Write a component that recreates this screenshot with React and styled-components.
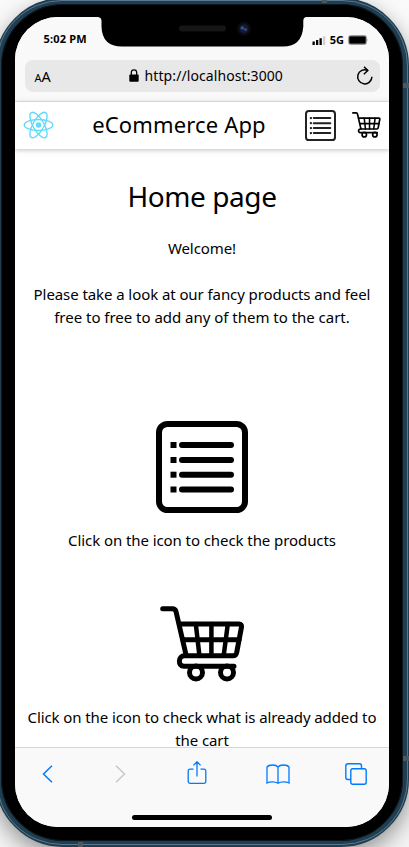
import React from 'react';
import styled, { createGlobalStyle } from 'styled-components';

const Global = createGlobalStyle`
  * { box-sizing: border-box; }
  html, body { margin: 0; height: 847px; overflow: hidden; background: #fff; }
  #root { height: 847px; overflow: hidden; }
  svg { display: block; flex: none; }
`;

const Stage = styled.div`
  position: relative;
  width: 409px;
  height: 847px;
  overflow: hidden;
  background: linear-gradient(#fafafa, #f4f4f4);
  font-family: "Noto Sans", "Open Sans", sans-serif;
  color: #000;
`;

const Phone = styled.div`
  width: 414px;
  height: 849px;
  margin: -2px 0 0 -5px;
  padding: 13px 14px 14px;
  border: 6px solid #213e51;
  border-radius: 68px;
  background: #000;
  box-shadow: inset 0 0 0 1px #0d171e, 0 8px 22px rgba(0, 0, 0, 0.4);
`;

const FrameShine = styled.div`
  position: absolute;
  left: -4px;
  top: 0;
  width: 412px;
  height: 845px;
  border: 1px solid #587a90;
  border-radius: 66px;
`;

const FrameBand = styled.i`
  position: absolute;
  left: ${(p) => p.$x}px;
  top: ${(p) => p.$y}px;
  width: ${(p) => p.$w}px;
  height: ${(p) => p.$h}px;
  background: #4a5860;
`;

const Screen = styled.div`
  display: flex;
  flex-direction: column;
  width: 374px;
  height: 810px;
  border-radius: 43px;
  overflow: hidden;
  background: #fff;
`;

const StatusBar = styled.div`
  position: relative;
  flex: none;
  display: flex;
  justify-content: space-between;
  height: 43px;
  padding: 13px 20px 0 28.5px;
  background: #f9f9f9;
  font-size: 11px;
  line-height: 18px;
  font-weight: 700;
`;

const Clock = styled.span`
  letter-spacing: 0.2px;
`;

const Signal = styled.div`
  display: flex;
  align-items: center;
  height: 20px;
  gap: 4px;
`;

const Notch = styled.svg`
  position: absolute;
  left: 83px;
  top: 0;
`;

const AddressArea = styled.div`
  flex: none;
  height: 42px;
  padding: 0 9px 0 10px;
  background: #f9f9f9;
  border-bottom: 1px solid #e6e6e6;
`;

const AddressBar = styled.div`
  display: grid;
  grid-template-columns: 63px 1fr 60px;
  align-items: center;
  height: 31.5px;
  padding: 0 6px 0 9.5px;
  border-radius: 8px;
  background: #e8e8e8;
`;

const TextSize = styled.span`
  font-size: 14.5px;
  small { font-size: 11px; }
`;

const Address = styled.span`
  display: flex;
  align-items: center;
  justify-content: center;
  gap: 6px;
  font-size: 14px;
  letter-spacing: ${(p) => p.$spacing}px;
  white-space: nowrap;
`;

const Reload = styled.span`
  justify-self: end;
`;

const Header = styled.header`
  position: relative;
  flex: none;
  display: flex;
  align-items: center;
  height: 46.5px;
  padding: 0 8px;
  background: #fff;
  box-shadow: 0 1px 5px rgba(0, 0, 0, 0.25);
`;

const AppName = styled.div`
  flex: 1;
  padding: 0 1px 2px 0;
  text-align: center;
  font-size: 22px;
  line-height: 30px;
  letter-spacing: 0.15px;
  white-space: nowrap;
`;

const HeaderIcons = styled.div`
  display: flex;
  align-items: center;
  gap: 16px;
`;

const Content = styled.main`
  flex: 1;
  min-height: 0;
  overflow: hidden;
  display: flex;
  flex-direction: column;
  align-items: center;
  padding-top: 25.5px;
`;

const Title = styled.h1`
  margin: 0 0 19px;
  font-size: 28px;
  font-weight: 400;
  line-height: 44px;
  letter-spacing: -0.42px;
`;

const Line = styled.div`
  height: 23px;
  font-size: 15px;
  line-height: 23px;
  letter-spacing: ${(p) => p.$spacing ?? -0.08}px;
  white-space: nowrap;
`;

const Paragraph = styled.div`
  display: flex;
  flex-direction: column;
  align-items: center;
  margin-bottom: ${(p) => p.$after || 0}px;
`;

const LinkIcon = styled.div`
  margin-bottom: ${(p) => p.$after}px;
`;

const BottomBar = styled.nav`
  flex: none;
  height: 80px;
  background: #f9f9f9;
  border-top: 1px solid #d8d8d8;
`;

const Tools = styled.div`
  display: grid;
  grid-template-columns: 64px 83px 69px 93px 64px;
  align-items: center;
  justify-items: center;
  height: 52px;
`;

const HomeIndicator = styled.div`
  width: 140px;
  height: 5px;
  margin: 15px auto 0;
  border-radius: 3px;
  background: #000;
`;

const ReactLogo = () => (
  <svg width="31" height="28" viewBox="-15.5 -14 31 28" fill="none" stroke="#61dafb" strokeWidth="1.4">
    <circle r="2.7" fill="#61dafb" stroke="none" />
    <ellipse rx="14.3" ry="5.5" />
    <ellipse rx="14.3" ry="5.5" transform="rotate(60)" />
    <ellipse rx="14.3" ry="5.5" transform="rotate(120)" />
  </svg>
);

const ListIcon = ({ size, color = '#000' }) => (
  <svg width={size} height={size} viewBox="0 0 92 92" fill="none" stroke={color} strokeWidth="6">
    <rect x="3" y="3" width="86" height="86" rx="8.5" />
    {[24, 39, 53.7, 68.5].map((y) => (
      <g key={y}>
        <rect x="14.5" y={y - 3} width="6" height="6" fill={color} stroke="none" />
        <path d={`M26 ${y}H75`} strokeLinecap="round" />
      </g>
    ))}
  </svg>
);

const CartIcon = ({ width }) => (
  <svg
    width={width}
    height={(width * 76) / 85}
    viewBox="0 0 85 76"
    fill="none"
    stroke="#000"
    strokeWidth="5"
    strokeLinecap="round"
    strokeLinejoin="round"
  >
    <path d="M2.7 2.7H12.5Q15.2 2.7 16 5.5L26.2 49.5" />
    <path d="M19.5 18H79Q82 18 81.5 21L76.7 46.5Q76 49.8 73 49.8H24.5C18 49.8 17.5 60.3 24 60.3H74" />
    <path d="M23 33.8H79" />
    <path d="M35.8 18L39.4 49.5M51.4 18V49.5M67.8 18L63.7 49.5" strokeWidth="4.5" />
    <circle cx="36" cy="66.5" r="6.5" />
    <circle cx="67" cy="66.5" r="6.5" />
  </svg>
);

export default function App() {
  return (
    <Stage>
      <Global />
      <Phone>
        <Screen>
          <StatusBar>
            <Clock>5:02 PM</Clock>
            <Notch width="208" height="30" viewBox="0 0 208 30">
              <path d="M0 0Q3.5 .5 3.5 4V9.5Q4 29.5 24 29.5H185Q204 29.5 205.3 9.5V4Q205.3 .5 208 0Z" fill="#000" />
              <rect x="81" y="8.5" width="47" height="6" rx="3" fill="#151515" />
              <circle cx="146" cy="11.8" r="7" fill="#0b0b0f" />
              <circle cx="146" cy="11.8" r="4.5" fill="#121b38" />
              <circle cx="144.3" cy="11" r="1.8" fill="#35508b" />
              <circle cx="147.5" cy="12.5" r="1.3" fill="#544b83" />
            </Notch>
            <Signal>
              <svg width="14" height="9" viewBox="0 0 14 9">
                <path d="M.5 5.5h2.3V9H.5zM4 4h2.3v5H4zM7.5 2.2h2.3V9H7.5z" />
                <path d="M11 .3h2.3V9H11z" fill="#d0d0d0" />
              </svg>
              <span>5G</span>
              <svg width="21" height="10" viewBox="0 0 21 10">
                <rect x=".5" y=".5" width="18" height="9" rx="2" fill="none" stroke="#999" />
                <rect x="1.2" y="1.2" width="16.6" height="7.6" rx="1" />
                <path d="M19.3 3.5q1.2 1.5 0 3z" fill="#888" />
              </svg>
            </Signal>
          </StatusBar>
          <AddressArea>
            <AddressBar>
              <TextSize><small>A</small>A</TextSize>
              <Address $spacing={0.09}>
                <svg width="10" height="13" viewBox="0 0 10 13">
                  <rect x=".3" y="5.4" width="9.4" height="7.4" rx="1" />
                  <path d="M2.3 6V3.6a2.7 2.7 0 0 1 5.4 0V6" fill="none" stroke="#000" strokeWidth="1.3" />
                </svg>
                http://localhost:3000
              </Address>
              <Reload>
                <svg width="18" height="20" viewBox="0 0 18 20" fill="none" stroke="#000" strokeWidth="1.5">
                  <path d="M15.9 10.8A7.1 7.1 0 1 1 11.7 4.3" />
                  <path d="M8 .8L11.8 4.5L7.8 8.2" />
                </svg>
              </Reload>
            </AddressBar>
          </AddressArea>
          <Header>
            <ReactLogo />
            <AppName>eCommerce App</AppName>
            <HeaderIcons>
              <ListIcon size={31} color="#222" />
              <CartIcon width={29} />
            </HeaderIcons>
          </Header>
          <Content>
            <Title>Home page</Title>
            <Paragraph $after={23}>
              <Line>Welcome!</Line>
            </Paragraph>
            <Paragraph $after={92}>
              <Line>Please take a look at our fancy products and feel</Line>
              <Line $spacing={-0.02}>free to free to add any of them to the cart.</Line>
            </Paragraph>
            <LinkIcon $after={16}><ListIcon size={92} /></LinkIcon>
            <Paragraph $after={54}>
              <Line>Click on the icon to check the products</Line>
            </Paragraph>
            <LinkIcon $after={24}><CartIcon width={85} /></LinkIcon>
            <Paragraph>
              <Line $spacing={-0.1}>Click on the icon to check what is already added to</Line>
              <Line>the cart</Line>
            </Paragraph>
          </Content>
          <BottomBar>
            <Tools>
              <svg width="11" height="18" viewBox="0 0 11 18" fill="none" stroke="#007aff" strokeWidth="1.5"><path d="M10 .8L1.5 9L10 17.2" /></svg>
              <svg width="11" height="18" viewBox="0 0 11 18" fill="none" stroke="#c8c8c8" strokeWidth="1.5"><path d="M1 .8L9.5 9L1 17.2" /></svg>
              <svg width="20" height="26" viewBox="0 0 20 26" fill="none" stroke="#007aff" strokeWidth="1.3">
                <path d="M6.5 8.2H3Q1.2 8.2 1.2 10V20.5Q1.2 22.3 3 22.3H17Q18.8 22.3 18.8 20.5V10Q18.8 8.2 17 8.2H13.5M10 15.5V.8M6.4 4.4L10 .8L13.6 4.4" />
              </svg>
              <svg width="24" height="20" viewBox="0 0 24 20" fill="none" stroke="#007aff" strokeWidth="1.3">
                <path d="M12 3.2Q10.5 1 6.5 1Q2.5 1 1 3V19Q3 17.8 6.5 17.8Q10 17.8 12 19.3Q14 17.8 17.5 17.8Q21 17.8 23 19V3Q21.5 1 17.5 1Q13.5 1 12 3.2V19" />
              </svg>
              <svg width="22" height="22" viewBox="0 0 22 22" fill="none" stroke="#007aff" strokeWidth="1.4">
                <rect x="5.8" y="5.8" width="15.4" height="15.4" rx="2" />
                <path d="M5.8 16.5H3Q.8 16.5 .8 14.5V3Q.8 .8 3 .8H14.5Q16.5 .8 16.5 3V5.8" />
              </svg>
            </Tools>
            <HomeIndicator />
          </BottomBar>
        </Screen>
      </Phone>
      <FrameShine />
      <FrameBand $x={322} $y={0} $w={5} $h={3} />
      <FrameBand $x={78} $y={842} $w={5} $h={5} />
      <FrameBand $x={403} $y={83} $w={6} $h={5} />
      <FrameBand $x={403} $y={756} $w={6} $h={5} />
    </Stage>
  );
}
